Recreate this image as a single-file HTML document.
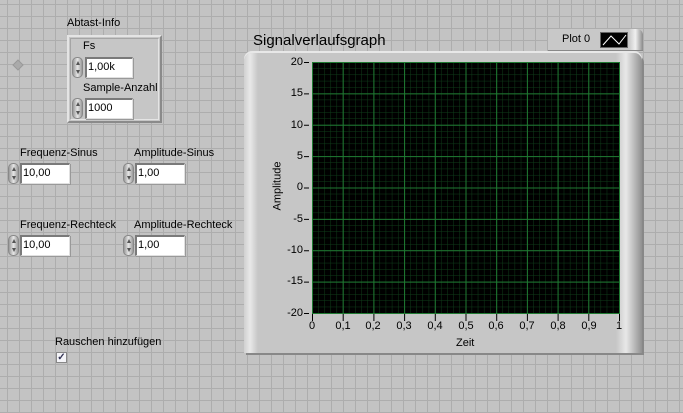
<!DOCTYPE html>
<html><head><meta charset="utf-8"><style>
*{margin:0;padding:0;box-sizing:border-box}
body{width:683px;height:413px;overflow:hidden;position:relative;font-family:"Liberation Sans",sans-serif;font-size:11px;color:#000;
background-color:#c3c3c3;
background-image:linear-gradient(90deg,#adadad 1px,transparent 1px),linear-gradient(#adadad 1px,transparent 1px);
background-size:12px 12px;background-position:7px 4px}
.a{position:absolute}
.lbl{position:absolute;font-size:11px;white-space:nowrap}
.num{position:absolute;height:21px;background:#fff;border-top:2px solid #7a7a7a;border-left:2px solid #7a7a7a;border-right:1px solid #e0e0e0;border-bottom:1px solid #e0e0e0;font-size:11px;padding:2px 0 0 1px;box-shadow:1px 1px 0 #999}
.spin{position:absolute;width:11px;height:21px;border-radius:5px;background:linear-gradient(90deg,#9a9a9a,#e6e6e6 50%,#9a9a9a);border:1px solid #888}
.spin:before{content:"";position:absolute;left:3px;top:3px;border-left:2px solid transparent;border-right:2px solid transparent;border-bottom:4px solid #555}
.spin:after{content:"";position:absolute;left:3px;bottom:3px;border-left:2px solid transparent;border-right:2px solid transparent;border-top:4px solid #555}
.yl{position:absolute;right:0;width:30px;text-align:right;font-size:11px}
.xl{position:absolute;top:0;font-size:11px;transform:translateX(-50%)}
</style></head><body>
<div class="a" style="left:14px;top:61px;width:8px;height:8px;background:#aaa;transform:rotate(45deg);border:1px solid #999"></div>

<div class="lbl" style="left:67px;top:17px">Abtast-Info</div>
<div class="a" style="left:67px;top:35px;width:95px;height:88px;background:#c6c6c6;border-top:2px solid #e4e4e4;border-left:2px solid #e4e4e4;border-right:2px solid #8a8a8a;border-bottom:2px solid #8a8a8a"></div>
<div class="a" style="left:70px;top:38px;width:89px;height:82px;border-top:1px solid #a5a5a5;border-left:1px solid #a5a5a5;border-right:1px solid #e4e4e4;border-bottom:1px solid #e4e4e4"></div>
<div class="lbl" style="left:83px;top:40px">Fs</div>
<div class="spin" style="left:72px;top:57px"></div>
<div class="num" style="left:85px;top:57px;width:48px">1,00k</div>
<div class="lbl" style="left:83px;top:82px">Sample-Anzahl</div>
<div class="spin" style="left:72px;top:98px"></div>
<div class="num" style="left:85px;top:98px;width:48px">1000</div>

<div class="lbl" style="left:20px;top:147px">Frequenz-Sinus</div>
<div class="spin" style="left:8px;top:163px"></div>
<div class="num" style="left:20px;top:163px;width:50px">10,00</div>
<div class="lbl" style="left:134px;top:147px">Amplitude-Sinus</div>
<div class="spin" style="left:123px;top:163px"></div>
<div class="num" style="left:135px;top:163px;width:50px">1,00</div>

<div class="lbl" style="left:20px;top:219px">Frequenz-Rechteck</div>
<div class="spin" style="left:8px;top:235px"></div>
<div class="num" style="left:20px;top:235px;width:50px">10,00</div>
<div class="lbl" style="left:134px;top:219px">Amplitude-Rechteck</div>
<div class="spin" style="left:123px;top:235px"></div>
<div class="num" style="left:135px;top:235px;width:50px">1,00</div>

<div class="lbl" style="left:55px;top:336px">Rauschen hinzufügen</div>
<div class="a" style="left:56px;top:352px;width:11px;height:11px;background:#f4f4f8;border:1px solid #888;font-size:10px;line-height:9px;color:#335;text-align:center;font-weight:bold">✓</div>

<div class="lbl" style="left:253px;top:32px;font-size:15px">Signalverlaufsgraph</div>
<div class="a" style="left:548px;top:29px;width:95px;height:22px;background:linear-gradient(90deg,#c8c8c8 85%,#f0f0f0 92%,#8a8a8a);border-radius:3px 6px 0 0;border-bottom:1px solid #888"></div>
<div class="lbl" style="left:562px;top:33px">Plot 0</div>
<div class="a" style="left:600px;top:32px;width:28px;height:16px;background:#000;border:1px solid #666">
<svg width="26" height="14" style="position:absolute;left:0;top:0"><polyline points="2,12 10,3 18,11 25,2" fill="none" stroke="#fff" stroke-width="1"/></svg></div>

<div class="a" style="left:244px;top:53px;width:398px;height:300px;background:linear-gradient(90deg,#d0d0d0 0,#e8e8e8 6px,#c6c6c6 14px,#c6c6c6 372px,#e8e8e8 382px,#909090 398px);border-radius:8px 8px 0 0;box-shadow:0 -2px 0 #e8e8e8,2px 2px 0 #888"></div>
<svg class="a" style="left:312px;top:62px" width="308" height="252">
<defs>
<pattern id="mi" width="6.14" height="6.275" patternUnits="userSpaceOnUse"><path d="M0 0V6.275M0 0H6.14" stroke="#0f3d1a" stroke-width="1" fill="none"/></pattern>
<pattern id="ma" width="30.7" height="31.375" patternUnits="userSpaceOnUse"><path d="M0.5 0V31.375M0 0.5H30.7" stroke="#1f7a32" stroke-width="1" fill="none"/></pattern>
</defs>
<rect width="308" height="252" fill="#000"/>
<rect width="308" height="252" fill="url(#mi)"/>
<rect width="308" height="252" fill="url(#ma)"/>
</svg>
<div class="a" style="left:270px;top:55px;width:40px;height:270px">
<div class="yl" style="top:1px;right:7px">20</div>
<div class="yl" style="top:32px;right:7px">15</div>
<div class="yl" style="top:64px;right:7px">10</div>
<div class="yl" style="top:95px;right:7px">5</div>
<div class="yl" style="top:126px;right:7px">0</div>
<div class="yl" style="top:158px;right:7px">-5</div>
<div class="yl" style="top:189px;right:7px">-10</div>
<div class="yl" style="top:220px;right:7px">-15</div>
<div class="yl" style="top:252px;right:7px">-20</div>
</div>
<svg class="a" style="left:300px;top:60px" width="325" height="262">
<g stroke="#000" stroke-width="1">
<path d="M4 2.5h5M4 33.9h5M4 65.3h5M4 96.6h5M4 128h5M4 159.4h5M4 190.8h5M4 222.1h5M4 253.5h5"/>
<path d="M12.5 254v7M43.2 254v7M73.9 254v7M104.6 254v7M135.3 254v7M166 254v7M196.7 254v7M227.4 254v7M258.1 254v7M288.8 254v7M319.5 254v7"/>
</g></svg>
<div class="a" style="left:0;top:320px;width:683px;height:14px">
<div class="xl" style="left:312px">0</div><div class="xl" style="left:343px">0,1</div><div class="xl" style="left:373px">0,2</div><div class="xl" style="left:404px">0,3</div><div class="xl" style="left:435px">0,4</div><div class="xl" style="left:466px">0,5</div><div class="xl" style="left:496px">0,6</div><div class="xl" style="left:527px">0,7</div><div class="xl" style="left:558px">0,8</div><div class="xl" style="left:589px">0,9</div><div class="xl" style="left:619px">1</div>
</div>
<div class="lbl" style="left:456px;top:337px">Zeit</div>
<div class="lbl" style="left:253px;top:180px;transform:rotate(-90deg);transform-origin:center">Amplitude</div>
</body></html>
